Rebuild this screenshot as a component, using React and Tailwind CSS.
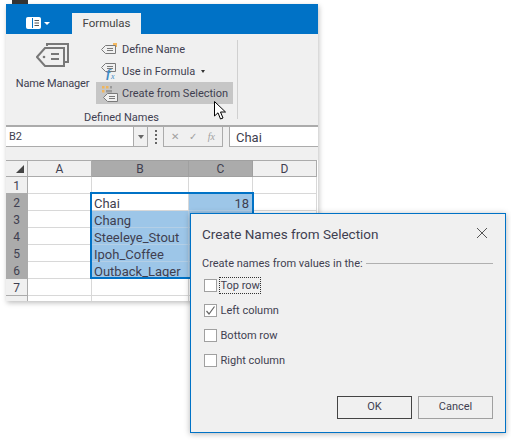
import React from "react";

const rows = [
  { n: 1, b: "", c: "" },
  { n: 2, b: "Chai", c: "18" },
  { n: 3, b: "Chang", c: "" },
  { n: 4, b: "Steeleye_Stout", c: "" },
  { n: 5, b: "Ipoh_Coffee", c: "" },
  { n: 6, b: "Outback_Lager", c: "" },
  { n: 7, b: "", c: "" },
];

const TagIcon = () => (
  <svg width="34" height="24" viewBox="0 0 34 24" fill="none" stroke="#787878" strokeWidth="2">
    <path d="M11 3V1H32V19H29" />
    <path d="M9 5H28V23H9L1 14Z" fill="#f0f0f0" />
    <circle cx="8" cy="14" r="1.3" fill="#787878" stroke="none" />
    <path d="M15 11H23M15 16H23" />
  </svg>
);

const SmallTag = ({ x = 0, y = 0 }) => (
  <g transform={`translate(${x} ${y})`} fill="none" stroke="#7a7a7a">
    <path d="M4.5 .5H14.500V8.500H4.500L.5 4.500Z" fill="#f0f0f0" />
    <path d="M6 3.500H12M6 5.500H12" />
  </g>
);

const Check = ({ checked, label, focused }) => (
  <div className="flex h-[25px] items-center">
    <span className="flex h-[13px] w-[13px] items-center justify-center border border-[#a0a0a0] bg-white">
      {checked && (
        <svg width="11" height="11" viewBox="0 0 11 11" fill="none" stroke="#666666" strokeWidth="1.2">
          <path d="M1.500 6L4 9L9.500 1.500" />
        </svg>
      )}
    </span>
    <span className={`ml-[3px] px-[0.5px] leading-[15px] ${focused ? "outline-1 outline-dotted outline-[#333333]" : ""}`}>{label}</span>
  </div>
);

export default function App() {
  return (
    <div className="relative h-[440px] w-[511px] overflow-hidden bg-white pl-[6px] pt-[4px] text-[11px] text-[#3f3f50]" style={{ fontFamily: 'Roboto, sans-serif' }}>
      <div className="absolute left-[12px] top-0 h-[4px] w-[16px] bg-[#333333]"></div>

      <div className="flex h-[297px] w-[312px] flex-col overflow-hidden bg-white shadow-[1px_2px_5px_rgba(0,0,0,0.25)]">
        {/* title bar with the tab */}
        <div className="flex h-[30px] flex-none items-end bg-[#0072c6]">
          <div className="mb-[5px] ml-[20px] flex w-[46px] items-center">
            <svg width="15" height="12" viewBox="0 0 15 12">
              <rect x="0.500" y="0.500" width="14" height="11" rx="1" fill="#ffffff" stroke="#ffffff" />
              <path d="M6.500 1V11" stroke="#0072c6" />
              <path d="M8.500 3.500H13M8.500 6H13M8.500 8.500H13" stroke="#555555" />
            </svg>
            <span className="ml-[3px] h-0 w-0 border-x-[3px] border-t-[3px] border-x-transparent border-t-white"></span>
          </div>
          <div className="flex h-[21px] w-[69px] items-center justify-center bg-[#f0f0f0] text-[11.500px] text-[#444444]">Formulas</div>
        </div>

        {/* ribbon */}
        <div className="flex h-[93px] flex-none border-b-2 border-[#ababab] bg-[#f0f0f0]">
          <div className="flex w-[231px] flex-col">
            <div className="flex flex-1">
              <div className="flex w-[90px] flex-col items-center pl-[3px] pt-[9px]">
                <TagIcon />
                <span className="mt-[9px] leading-[15px] tracking-[-0.15px]">Name Manager</span>
              </div>
              <div className="flex flex-col pt-[4px]">
                <div className="flex h-[22px] w-[137px] items-center pl-[5px]">
                  <svg width="17" height="14" viewBox="0 0 17 14" className="mr-[4px]">
                    <rect x="12" y="1" width="4" height="4" fill="#f5b95f" />
                    <SmallTag x={0} y={3} />
                  </svg>
                  <span className="pt-[2px]">Define Name</span>
                </div>
                <div className="flex h-[22px] w-[137px] items-center pl-[5px]">
                  <svg width="17" height="17" viewBox="0 0 17 17" className="mr-[4px]">
                    <SmallTag x={0} y={0} />
                    <text x="5" y="15" fontSize="13" fontStyle="italic" fontWeight="700" fill="#3e8ac6" fontFamily="Liberation Serif, serif">f</text>
                    <text x="10" y="16" fontSize="8" fontStyle="italic" fill="#3e8ac6" fontFamily="Liberation Serif, serif">x</text>
                  </svg>
                  <span className="pt-[2px]">Use in Formula</span>
                  <span className="ml-[6px] h-0 w-0 border-x-[2.500px] border-t-[3px] border-x-transparent border-t-[#333333]"></span>
                </div>
                <div className="flex h-[22px] w-[137px] items-center bg-[#c6c6c6] pl-[5px]">
                  <svg width="17" height="17" viewBox="0 0 17 17" className="mr-[4px]">
                    <path d="M1 1h2.500v2.500H1zM5 1h2.500v2.500H5zM1 5h2.500v2.500H1z" fill="#f0b55c" />
                    <path d="M9 1h2v2.500H9zM5 5h6v2.500H5z" fill="#9a9a9a" />
                    <SmallTag x={2} y={8} />
                  </svg>
                  <span className="pt-[2px]">Create from Selection</span>
                </div>
              </div>
            </div>
            <div className="text-center leading-[15px]">Defined Names</div>
          </div>
          <div className="mt-[6px] mb-[6px] w-px bg-[#d0d0d0]"></div>
        </div>

        {/* formula bar */}
        <div className="flex h-[20px] flex-none bg-[#f0f0f0]">
          <div className="flex w-[142px] border-b border-r border-[#ababab] bg-white">
            <span className="flex-1 pl-[3px] leading-[20px]">B2</span>
            <span className="flex w-[14px] items-center justify-center border-l border-[#ababab] bg-[#f0f0f0]">
              <span className="h-0 w-0 border-x-[3.500px] border-t-[4px] border-x-transparent border-t-[#666666]"></span>
            </span>
          </div>
          <div className="flex w-[15px] flex-col items-center justify-center gap-[2px]">
            <span className="h-[2px] w-[2px] bg-[#666666]"></span>
            <span className="h-[2px] w-[2px] bg-[#666666]"></span>
            <span className="h-[2px] w-[2px] bg-[#666666]"></span>
            <span className="h-[2px] w-[2px] bg-[#666666]"></span>
          </div>
          <div className="flex w-[60px] items-center justify-around border border-t-0 border-[#ababab] px-[2px] text-[10px] text-[#a0a0a0]">
            <span>✕</span>
            <span>✓</span>
            <span className="italic" style={{ fontFamily: '"Liberation Serif", serif' }}>fx</span>
          </div>
          <div className="ml-[6px] flex-1 border-b border-l border-[#ababab] bg-white pl-[6px] text-[13px] leading-[21px]">Chai</div>
        </div>
        <div className="h-[13px] flex-none bg-[#f0f0f0]"></div>

        {/* sheet */}
        <div className="relative flex-1 overflow-hidden bg-white">
          <div className="grid grid-cols-[22px_64px_97px_64px_64px] auto-rows-[17px] text-[12px] leading-[19px]">
            <div className="relative border-y border-r border-[#ababab] bg-[#f0f0f0]">
              <span className="absolute bottom-[3px] right-[3px] h-0 w-0 border-b-[8px] border-l-[8px] border-b-[#444444] border-l-transparent"></span>
            </div>
            <div className="border-y border-r border-[#ababab] bg-[#f0f0f0] text-center leading-[16px]">A</div>
            <div className="border-y border-r border-[#a0a0a0] bg-[#ababab] text-center leading-[16px]">B</div>
            <div className="border-y border-r border-[#a0a0a0] bg-[#ababab] text-center leading-[16px]">C</div>
            <div className="border-y border-r border-[#ababab] bg-[#f0f0f0] text-center leading-[16px]">D</div>
            {rows.map((r) => {
              const hot = r.n >= 2 && r.n <= 6;
              return (
                <React.Fragment key={r.n}>
                  <div className={`border-b border-r border-[#ababab] text-center ${hot ? "bg-[#ababab]" : "bg-[#f0f0f0]"}`}>{r.n}</div>
                  <div className="border-b border-r border-[#d8d8d8]"></div>
                  <div className={`border-b border-r pl-[2px] text-[13px] ${hot && r.n > 2 ? "border-[#b4cfe6] bg-[#9dc6e8]" : "border-[#d8d8d8]"}`}>{r.b}</div>
                  <div className={`border-b border-r pr-[3px] text-right text-[13px] ${hot ? "border-[#b4cfe6] bg-[#9dc6e8]" : "border-[#d8d8d8]"}`}>{r.c}</div>
                  <div className="border-b border-r border-[#d8d8d8]"></div>
                </React.Fragment>
              );
            })}
            <div className="border-r border-[#ababab] bg-[#f0f0f0]"></div>
            <div className="border-r border-[#d8d8d8]"></div>
            <div className="border-r border-[#d8d8d8]"></div>
            <div className="border-r border-[#d8d8d8]"></div>
            <div className="border-r border-[#d8d8d8]"></div>
          </div>
          {/* selection frame */}
          <div className="absolute left-[84px] top-[32px] h-[87px] w-[164px] border-2 border-[#0072c6]"></div>
        </div>
      </div>

      {/* cursor */}
      <svg className="absolute left-[214px] top-[101px]" width="13" height="19" viewBox="0 0 13 19">
        <path d="M.5.5V15L4 11.800 6.500 18 9 17 6.500 11H11.500Z" fill="#ffffff" stroke="#000000" />
      </svg>

      {/* dialog */}
      <div className="absolute left-[190px] top-[213px] flex h-[220px] w-[316px] flex-col border border-[#0072c6] bg-[#f0f0f0] px-[11px] shadow-[0_1px_6px_rgba(0,0,0,0.3)]">
        <div className="flex h-[30px] items-end justify-between">
          <span className="text-[13.500px] leading-[20px] text-[#3f3f50]">Create Names from Selection</span>
          <svg className="mb-[5px] mr-[6px]" width="12" height="12" viewBox="0 0 12 12" stroke="#555555" fill="none">
            <path d="M1 1L11 11M11 1L1 11" />
          </svg>
        </div>
        <div className="mt-[12px] flex items-center">
          <span className="leading-[15px]">Create names from values in the:</span>
          <span className="ml-[3px] mr-[1px] h-px flex-1 bg-[#b0b0b0]"></span>
        </div>
        <div className="mt-[2px] pl-[2px]">
          <Check label="Top row" focused />
          <Check label="Left column" checked />
          <Check label="Bottom row" />
          <Check label="Right column" />
        </div>
        <div className="mt-auto mb-[13px] flex justify-end gap-[6px] pr-[1px]">
          <button className="h-[23px] w-[75px] border border-[#444444]">OK</button>
          <button className="h-[23px] w-[75px] border border-[#a0a0a0]">Cancel</button>
        </div>
      </div>
    </div>
  );
}
